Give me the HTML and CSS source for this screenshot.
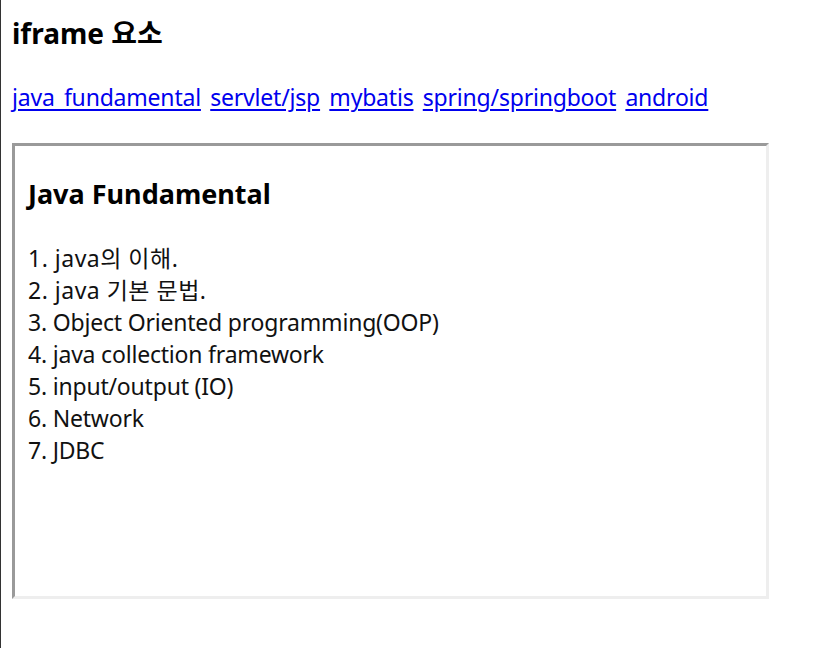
FILE: index.html
```html
<!DOCTYPE html>
<html lang="ko">
<head>
<meta charset="utf-8">
<title>iframe 요소</title>
<link rel="stylesheet" href="styles.css">
</head>
<body>
<h3 class="title">iframe 요소</h3>
<nav class="links">
<a href="#">java fundamental</a>
<a href="#">servlet/jsp</a>
<a href="#">mybatis</a>
<a href="#">spring/springboot</a>
<a href="#">android</a>
</nav>
<div class="frame">
<h3 class="frame-title">Java Fundamental</h3>
<div class="list">
<div class="ko">1. java의 이해.</div>
<div class="ko">2. java 기본 문법.</div>
<div>3. Object Oriented programming(OOP)</div>
<div>4. java collection framework</div>
<div>5. input/output (IO)</div>
<div>6. Network</div>
<div>7. JDBC</div>
</div>
</div>
</body>
</html>
```
FILE: styles.css
```css
html {
  border-left: 1px solid #333;
  min-height: 100%;
  box-sizing: border-box;
  background: #fff;
}
body {
  margin: 0;
  padding: 15px 0 0 11px;
  font-family: "Noto Sans", "Noto Sans CJK KR", sans-serif;
  font-size: 23px;
  letter-spacing: -0.2px;
  color: #000;
}
.title {
  margin: 0;
  font-size: 28px;
  line-height: 36px;
  font-weight: bold;
  letter-spacing: 0;
}
.links {
  margin-top: 30px;
  line-height: 32px;
  word-spacing: 3.5px;
}
.links a {
  color: #0000ee;
  text-decoration: underline;
  text-underline-offset: 3px;
}
.frame {
  margin-top: 30px;
  box-sizing: border-box;
  width: 757px;
  height: 456px;
  border-style: solid;
  border-width: 3px;
  border-color: #9a9a9a #eeeeee #eeeeee #9a9a9a;
  padding: 30px 12px 0 13px;
  color: #111;
}
.frame-title {
  margin: 0;
  font-size: 27px;
  line-height: 36px;
  font-weight: bold;
  letter-spacing: 0;
  color: #000;
}
.list {
  margin-top: 30px;
  line-height: 32px;
}
.ko {
  letter-spacing: 0.5px;
}
```
